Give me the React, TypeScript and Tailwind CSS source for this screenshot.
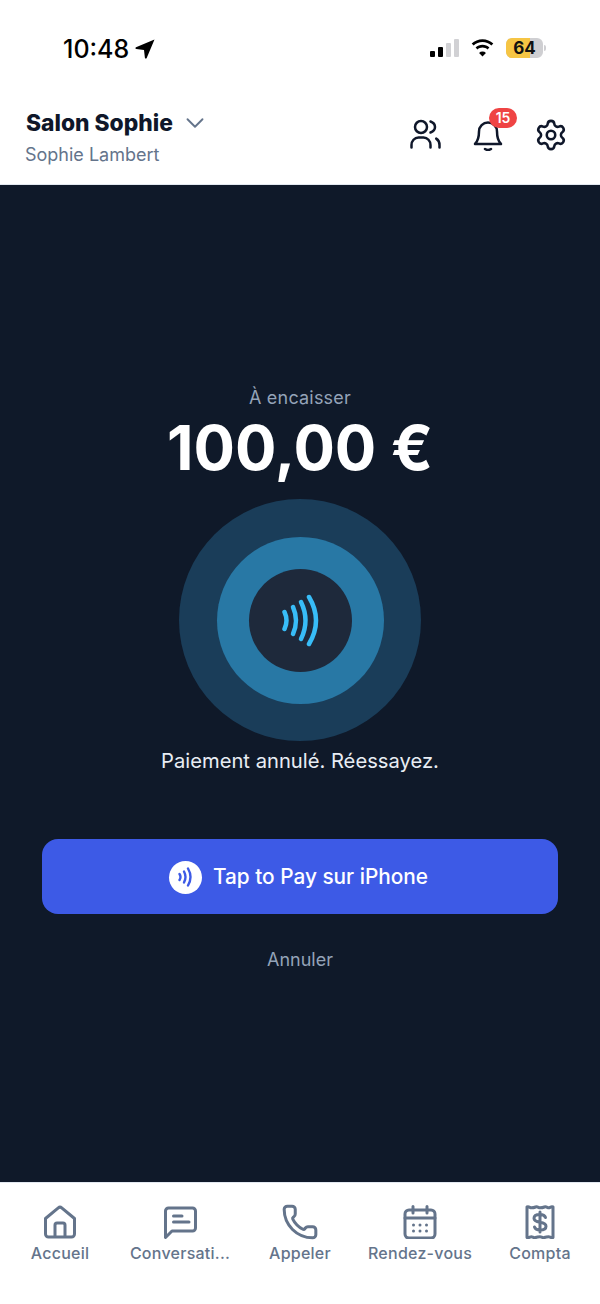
import { ChevronDown, Phone, Settings } from "lucide-react";

const tabs = [
  {
    label: "Accueil",
    icon: (
      <svg viewBox="0 0 34 34" width="34" height="34" fill="none" stroke="currentColor" strokeWidth="3" strokeLinejoin="round">
        <path d="M2.500 13.500 15.300 2.800a2.600 2.600 0 0 1 3.400 0L31.500 13.500V29a3 3 0 0 1-3 3h-23a3 3 0 0 1-3-3z" />
        <path d="M12 32V20a2 2 0 0 1 2-2h6a2 2 0 0 1 2 2v12" />
      </svg>
    ),
  },
  {
    label: "Conversati...",
    icon: (
      <svg viewBox="0 0 34 34" width="34" height="34" fill="none" stroke="currentColor" strokeWidth="3" strokeLinecap="round" strokeLinejoin="round">
        <path d="M2.500 32.500V6a3 3 0 0 1 3-3h24a3 3 0 0 1 3 3v17a3 3 0 0 1-3 3H9z" />
        <path d="M10.500 11H19M10.500 17H26" />
      </svg>
    ),
  },
  { label: "Appeler", icon: <Phone size={38} strokeWidth={1.900} /> },
  {
    label: "Rendez-vous",
    icon: (
      <svg viewBox="0 0 34 34" width="34" height="34" fill="none" stroke="currentColor" strokeWidth="3" strokeLinecap="round">
        <rect x="2" y="5" width="30" height="28" rx="4" />
        <path d="M2 13h30M10 1.500V8M24 1.500V8" />
        <g stroke="none" fill="currentColor">
          <circle cx="10.500" cy="20" r="1.500" /><circle cx="17" cy="20" r="1.500" /><circle cx="23.500" cy="20" r="1.500" />
          <circle cx="10.500" cy="26" r="1.500" /><circle cx="17" cy="26" r="1.500" /><circle cx="23.500" cy="26" r="1.500" />
        </g>
      </svg>
    ),
  },
  {
    label: "Compta",
    icon: (
      <svg viewBox="0 0 34 34" width="34" height="34" fill="none" stroke="currentColor" strokeWidth="3" strokeLinecap="round" strokeLinejoin="round">
        <path d="M4 2v30.500c2 .8 3-.8 4.300-.8s2.400 1.600 4.300.8 2.900-.8 4.400-.8 2.500 1.600 4.400.8 3-.8 4.300-.8 2.300 1.600 4.300.8V2c-2-.8-3 .8-4.300.8s-2.400-1.600-4.300-.8-2.900.8-4.400.8-2.500-1.600-4.400-.8-3 .8-4.300.8S6 1.200 4 2z" />
        <path d="M22.500 12.500c-.5-1.500-2.500-3-5.500-3-3.500 0-6 1.300-6 3.800s2.500 3.400 6 3.900 6 1.500 6 4-2.500 3.800-6 3.800c-3 0-5-1.500-5.500-3M17 7v20" />
      </svg>
    ),
  },
];

export default function App() {
  return (
    <div className="flex h-[1304px] w-[600px] flex-col overflow-hidden bg-white font-['Inter',sans-serif]">
      {/* status bar */}
      <div className="flex h-[96px] shrink-0 items-start justify-between pl-[63px] pr-[54px] pt-[34px]">
        <div className="flex items-center gap-[6px] text-[25px] font-medium leading-[30px] text-black">
          10:48
          <svg viewBox="0 0 20 20" width="20" height="20" fill="currentColor">
            <path d="M19.500.500 1 8.300c-.9.400-.7 1.700.3 1.800l7.700.9.900 7.700c.1 1 1.400 1.200 1.800.3z" />
          </svg>
        </div>
        <div className="flex items-center gap-[11px] pt-[4px]">
          <div className="flex items-end gap-[3px]">
            <span className="h-[6px] w-[5px] rounded-[1px] bg-black" />
            <span className="h-[10px] w-[5px] rounded-[1px] bg-black" />
            <span className="h-[14px] w-[5px] rounded-[1px] bg-[#d1d1d4]" />
            <span className="h-[18px] w-[5px] rounded-[1px] bg-[#d1d1d4]" />
          </div>
          <svg viewBox="0 0 26 19" width="25" height="18" fill="currentColor" className="text-black">
            <path d="M13 3.200c3.600 0 6.900 1.400 9.400 3.700l2-2.100C21.400 2 17.400.2 13 .2S4.600 2 1.600 4.800l2 2.100C6.100 4.600 9.400 3.200 13 3.200z" />
            <path d="M13 9c2 0 3.900.8 5.300 2l2-2.100C18.300 7.100 15.800 6 13 6S7.700 7.100 5.700 8.900l2 2.100C9.100 9.800 11 9 13 9z" />
            <path d="m13 18.500 3.600-3.800c-1-.9-2.200-1.400-3.600-1.400s-2.600.5-3.600 1.400z" />
          </svg>
          <div className="flex items-center gap-[1px]">
            <div className="relative flex h-[20px] w-[37px] items-center justify-center overflow-hidden rounded-[6px] bg-[#cfcfd2]">
              <span className="absolute inset-y-0 left-0 w-[24px] bg-[#f6c544]" />
              <span className="relative text-[17px] font-bold leading-none text-[#111]">64</span>
            </div>
            <span className="h-[6px] w-[2px] rounded-r-sm bg-[#cfcfd2]" />
          </div>
        </div>
      </div>

      {/* header */}
      <header className="flex h-[89px] shrink-0 items-start justify-between border-b border-[#e2e8f0] pl-[26px] pr-[32px] pt-[11px]">
        <div>
          <div className="flex items-center gap-[7px]">
            <span className="text-[22.800px] font-extrabold leading-[32px] text-[#0f172a]">Salon Sophie</span>
            <ChevronDown size={30} strokeWidth={1.500} className="text-[#64748b]" />
          </div>
          <div className="mt-[4px] -ml-[1px] text-[18px] leading-[24px] text-[#64748b]">Sophie Lambert</div>
        </div>
        <div className="flex items-start gap-[31px] pt-[12px] text-[#0f172a]">
          <svg viewBox="0 0 31 30" width="31" height="30" fill="none" stroke="currentColor" strokeWidth="2.500" strokeLinecap="round">
            <circle cx="11" cy="8" r="6" />
            <path d="M1.500 28.500v-2.500c0-4 3-7.500 7-7.500h5c4 0 7 3.500 7 7.500v2.500" />
            <path d="M20.500 2.500c2.800 1 4.500 3 4.500 5.500s-1.700 4.500-4.500 5.500M29.500 28.500v-2.500c0-2.800-1-5-3.300-6.400" />
          </svg>
          <div className="relative ml-[1px]">
            <svg viewBox="0 0 30 32" width="30" height="32" fill="none" stroke="currentColor" strokeWidth="2.500" strokeLinecap="round" strokeLinejoin="round">
              <path d="M6 12.500a9 9 0 0 1 18 0c0 7 1.500 10 4 12.500H2c2.500-2.500 4-5.500 4-12.500z" />
              <path d="M12 30c1.800 1.200 4.200 1.200 6 0" />
            </svg>
            <span className="absolute -top-[11px] left-[16px] flex h-[20px] w-[28px] items-center justify-center rounded-full bg-[#ef4444] text-[14px] font-semibold leading-none text-white">15</span>
          </div>
          <Settings size={34} strokeWidth={1.800} className="-mt-[1px]" />
        </div>
      </header>

      {/* encaissement */}
      <main className="flex flex-1 flex-col items-center bg-[#0f1929] pt-[202px]">
        <div className="text-[18px] leading-[22px] tracking-[0.2px] text-[#94a3b8]">À encaisser</div>
        <div className="mt-[3px] text-[61.500px] font-bold leading-[72px] text-white">100,00 €</div>
        <div className="mt-[15px] flex h-[242px] w-[242px] items-center justify-center rounded-full bg-[#1a3d59]">
          <div className="flex h-[167px] w-[167px] items-center justify-center rounded-full bg-[#2878a5]">
            <div className="flex h-[103px] w-[103px] items-center justify-center rounded-full bg-[#1e293b]">
              <svg viewBox="0 0 37 53" width="37" height="53" fill="none" stroke="currentColor" strokeWidth="4.500" strokeLinecap="round" className="text-[#38bdf8]">
                <path d="M2.500 18Q6.500 26.500 2.500 35" />
                <path d="M11 13Q17 26.500 11 40" />
                <path d="M19 8Q28 26.500 19 45" />
                <path d="M27 3Q41 26.500 27 50" />
              </svg>
            </div>
          </div>
        </div>
        <div className="mt-[6px] text-[20.200px] leading-[28px] text-[#e8edf4]">Paiement annulé. Réessayez.</div>
        <button className="mt-[64px] flex h-[75px] w-[516px] items-center justify-center gap-[11px] rounded-[16px] bg-[#3d5ae6] pr-[3px] pt-[1px] text-[20.800px] font-[550] text-white">
          <span className="flex h-[33px] w-[33px] items-center justify-center rounded-full bg-white">
            <svg viewBox="0 0 14 20" width="14" height="20" fill="none" stroke="currentColor" strokeWidth="2.400" strokeLinecap="round" className="text-[#3d5ae6]">
              <path d="M1.500 7Q3.500 10 1.500 13" />
              <path d="M6 4.500Q9 10 6 15.500" />
              <path d="M10 1.500Q15 10 10 18.500" />
            </svg>
          </span>
          Tap to Pay sur iPhone
        </button>
        <div className="mt-[34px] text-[18px] leading-[24px] text-[#94a3b8]">Annuler</div>
      </main>

      {/* tab bar */}
      <nav className="flex h-[122px] shrink-0 items-start border-t border-[#e2e8f0] pt-[21px]">
        {tabs.map((tab) => (
          <div key={tab.label} className="flex w-[120px] flex-col items-center text-[#64748b]">
            <div className="flex h-[36px] items-center justify-center">{tab.icon}</div>
            <span className="mt-[2px] text-[16px] font-[450] leading-[22px] tracking-[0.25px]">{tab.label}</span>
          </div>
        ))}
      </nav>
    </div>
  );
}
